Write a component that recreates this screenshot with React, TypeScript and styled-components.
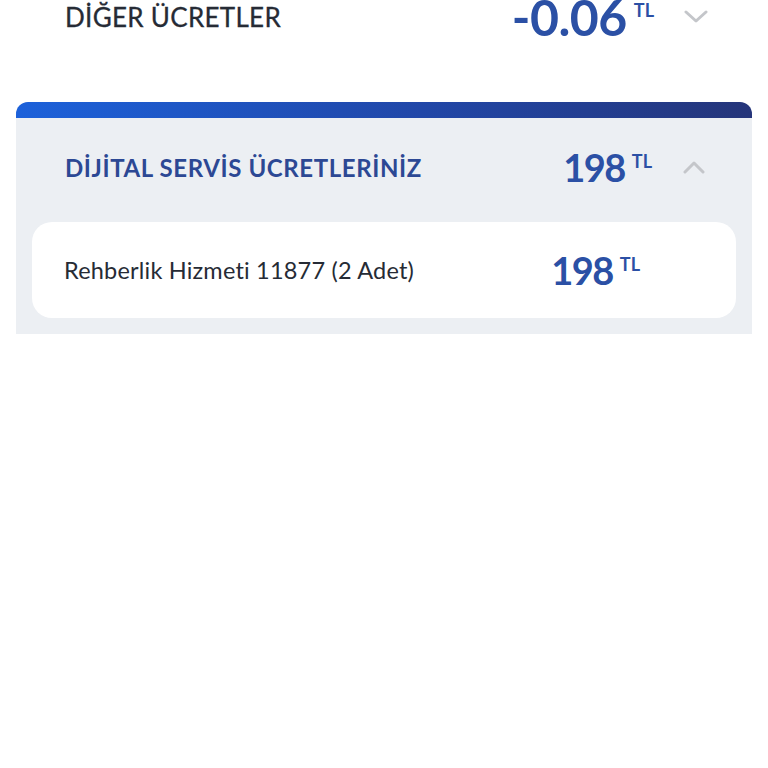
import React from 'react'
import styled, { createGlobalStyle } from 'styled-components'

const GlobalStyle = createGlobalStyle`
  * { box-sizing: border-box; }
  html, body { margin: 0; padding: 0; background: #fff; }
  body {
    font-family: Lato, "Noto Sans", sans-serif;
    color: #262b35;
  }
`

const Page = styled.div`
  width: 768px;
  min-height: 768px;
  background: #fff;
`

const SummaryRow = styled.div`
  height: 34px;
  display: flex;
  align-items: center;
  padding: 0 60px 0 65px;
`

const SummaryTitle = styled.div`
  flex: 1;
  font-size: 26px;
  font-weight: 400;
  letter-spacing: 0.3px;
  color: #262b35;
  -webkit-text-stroke: 0.3px #262b35;
`

const Card = styled.section`
  margin: 68px 16px 0;
  border-radius: 12px 12px 0 0;
  overflow: hidden;
  background: #eceff3;
  padding-bottom: 16px;
`

const CardBar = styled.div`
  height: 16px;
  background: linear-gradient(90deg, #1c61da 0%, #2147a8 55%, #25357a 100%);
`

const CardHeader = styled.div`
  height: 98px;
  display: flex;
  align-items: center;
  padding: 0 46px 0 49px;
`

const CardTitle = styled.h2`
  flex: 1;
  margin: 0;
  font-size: 24px;
  font-weight: 700;
  letter-spacing: 0.6px;
  color: #2c4894;
`

const ItemList = styled.div`
  display: flex;
  flex-direction: column;
  gap: 12px;
  padding: 6px 16px 0;
`

const Item = styled.div`
  height: 96px;
  display: flex;
  align-items: center;
  padding: 0 96px 0 32px;
  background: #fff;
  border-radius: 20px;
`

const ItemName = styled.div`
  flex: 1;
  font-size: 23.5px;
  letter-spacing: 0.2px;
  color: #262b35;
`

const AmountWrap = styled.div<{ size: number; spacing: number }>`
  display: flex;
  align-items: flex-start;
  color: #2b50a5;
  font-weight: 700;
  line-height: 1;
  font-size: ${({ size }) => size}px;
  letter-spacing: ${({ spacing }) => spacing}px;
`

const Currency = styled.span<{ offset: number }>`
  font-size: 18px;
  margin-left: 7px;
  margin-top: ${({ offset }) => offset}px;
  letter-spacing: 0;
`

const Chevron = styled.svg`
  width: 24px;
  height: 14px;
  margin-left: 30px;
  flex-shrink: 0;
`

function Amount({ value, size, spacing = -1.5, offset = 4 }: { value: string; size: number; spacing?: number; offset?: number }) {
  return (
    <AmountWrap size={size} spacing={spacing}>
      {value}
      <Currency offset={offset}>TL</Currency>
    </AmountWrap>
  )
}

function ChevronIcon({ up }: { up?: boolean }) {
  return (
    <Chevron viewBox="0 0 24 14" fill="none">
      <polyline
        points={up ? '3,12 12,3 21,12' : '2,2 12,11 22,2'}
        stroke="#c4c6ca"
        strokeWidth="3"
        strokeLinecap="round"
        strokeLinejoin="round"
      />
    </Chevron>
  )
}

const items = [{ id: 0, name: 'Rehberlik Hizmeti 11877 (2 Adet)', amount: '198' }]

export default function App() {
  return (
    <Page>
      <GlobalStyle />
      <SummaryRow>
        <SummaryTitle>DİĞER ÜCRETLER</SummaryTitle>
        <Amount value="-0.06" size={50} spacing={-0.5} offset={9} />
        <ChevronIcon />
      </SummaryRow>

      <Card>
        <CardBar />
        <CardHeader>
          <CardTitle>DİJİTAL SERVİS ÜCRETLERİNİZ</CardTitle>
          <Amount value="198" size={38} />
          <ChevronIcon up />
        </CardHeader>
        <ItemList>
          {items.map(item => (
            <Item key={item.id}>
              <ItemName>{item.name}</ItemName>
              <Amount value={item.amount} size={38} />
            </Item>
          ))}
        </ItemList>
      </Card>
    </Page>
  )
}
